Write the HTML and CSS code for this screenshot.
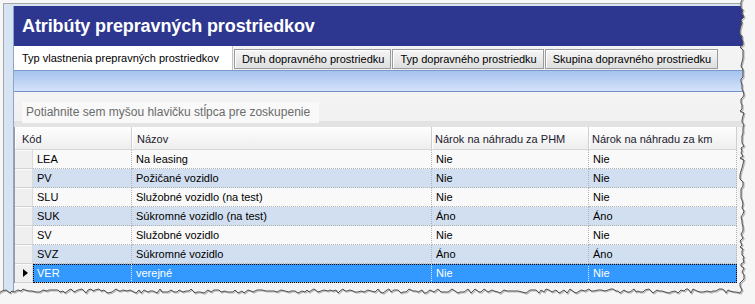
FILE: index.html
```html
<!DOCTYPE html>
<html lang="sk">
<head>
  <meta charset="UTF-8">
  <title>Atribúty prepravných prostriedkov</title>
  <link rel="stylesheet" href="styles.css">
</head>
<body>
  <div class="frame">
    <div class="panel">
      <div class="title">Atribúty prepravných prostriedkov</div>
      <div class="tabs">
        <div class="tab active">Typ vlastnenia prepravných prostriedkov</div>
        <div class="tab">Druh dopravného prostriedku</div>
        <div class="tab">Typ dopravného prostriedku</div>
        <div class="tab">Skupina dopravného prostriedku</div>
      </div>
      <div class="bluebar"></div>
      <div class="group">
        <span class="group-hint">Potiahnite sem myšou hlavičku stĺpca pre zoskupenie</span>
      </div>
      <div class="grid">
        <div class="head">
          <div class="hc h-kod">Kód</div>
          <div class="hc c-name">Názov</div>
          <div class="hc c-phm">Nárok na náhradu za PHM</div>
          <div class="hc c-km">Nárok na náhradu za km</div>
        </div>
        <div class="rows">
          <div class="row">
            <div class="sel"></div>
            <div class="cells">
              <div class="c c-kod">LEA</div><div class="c c-name">Na leasing</div><div class="c c-phm">Nie</div><div class="c c-km">Nie</div>
            </div>
          </div>
          <div class="row">
            <div class="sel"></div>
            <div class="cells">
              <div class="c c-kod">PV</div><div class="c c-name">Požičané vozidlo</div><div class="c c-phm">Nie</div><div class="c c-km">Nie</div>
            </div>
          </div>
          <div class="row">
            <div class="sel"></div>
            <div class="cells">
              <div class="c c-kod">SLU</div><div class="c c-name">Služobné vozidlo (na test)</div><div class="c c-phm">Nie</div><div class="c c-km">Nie</div>
            </div>
          </div>
          <div class="row">
            <div class="sel"></div>
            <div class="cells">
              <div class="c c-kod">SUK</div><div class="c c-name">Súkromné vozidlo (na test)</div><div class="c c-phm">Áno</div><div class="c c-km">Áno</div>
            </div>
          </div>
          <div class="row">
            <div class="sel"></div>
            <div class="cells">
              <div class="c c-kod">SV</div><div class="c c-name">Služobné vozidlo</div><div class="c c-phm">Nie</div><div class="c c-km">Nie</div>
            </div>
          </div>
          <div class="row">
            <div class="sel"></div>
            <div class="cells">
              <div class="c c-kod">SVZ</div><div class="c c-name">Súkromné vozidlo</div><div class="c c-phm">Áno</div><div class="c c-km">Áno</div>
            </div>
          </div>
          <div class="row current">
            <div class="sel"></div>
            <div class="cells">
              <div class="c c-kod">VER</div><div class="c c-name">verejné</div><div class="c c-phm">Nie</div><div class="c c-km">Nie</div>
            </div>
          </div>
        </div>
      </div>
    </div>
  </div>

  <svg id="tear" class="tear" width="755" height="304">
    <path id="tear-fill" fill="#f6f6f6"></path>
    <path id="tear-shadow" fill="none" stroke="#b4b4b4" stroke-width="1.2" transform="translate(1,1)"></path>
    <path id="tear-line" fill="none" stroke="#4d4d4d" stroke-width="1"></path>
  </svg>

  <script>
    // torn paper edge along the right and bottom
    let seed = 11;
    const rnd = () => {
      seed = (seed * 9301 + 49297) % 233280;
      return seed / 233280;
    };
    const pts = [];
    for (let y = -2; y < 290; y += 2 + Math.floor(rnd() * 3)) {
      pts.push([742 + Math.round(rnd() * 4 - 2), y]);
    }
    for (let x = 742; x > -4; x -= 2 + Math.floor(rnd() * 3)) {
      pts.push([x, 291 + Math.round(rnd() * 4 - 2)]);
    }
    const line = 'M' + pts.map(p => p.join(',')).join(' L');
    document.getElementById('tear-fill').setAttribute('d', line + ' L-4,310 L760,310 L760,-4 Z');
    document.getElementById('tear-shadow').setAttribute('d', line);
    document.getElementById('tear-line').setAttribute('d', line);
  </script>
</body>
</html>
```

FILE: styles.css
```css
body {
  margin: 0;
  width: 755px;
  height: 304px;
  overflow: hidden;
  position: relative;
  background-color: #f6f6f6;
  font-family: "Liberation Sans", Arial, sans-serif;
  font-size: 11px;
  color: #000;
}

.frame {
  margin: 3px 0 0 3px;
  height: 300px;
  padding: 2px 0 0 9px;
  border-top: 1px solid #a6a6a6;
  border-left: 1px solid #a6a6a6;
  background-color: #d5e3f2;
}

.panel {
  height: 100%;
  border-left: 1px solid #8ea4c2;
  background-color: #f4f4f4;
}

.title {
  height: 40px;
  padding-left: 8px;
  line-height: 40px;
  background-color: #2e3790;
  color: #fff;
  font-size: 18px;
  font-weight: bold;
  letter-spacing: -0.1px;
}

/* tabs */
.tabs {
  display: flex;
  align-items: flex-end;
  height: 24px;
  background-color: #f3f3f3;
}

.tab {
  box-sizing: border-box;
  height: 20px;
  margin: 0 1px 1px 0;
  padding: 0 6px 0 7px;
  line-height: 18px;
  white-space: nowrap;
  border: 1px solid #9b9b9b;
  background: linear-gradient(#f6f6f6, #dedede);
  box-shadow: inset 1px 1px #fff;
}

.tab.active {
  height: 24px;
  margin: 0 1px 0 0;
  padding: 0 13px 0 8px;
  line-height: 24px;
  border: none;
  border-right: 1px solid #c4c4c4;
  background: #fff;
  box-shadow: none;
}

.bluebar {
  box-sizing: border-box;
  height: 22px;
  border-top: 1px solid #7898cf;
  border-bottom: 1px solid #7291c4;
  background: linear-gradient(#a6c2ee, #d4e3fa);
}

/* group-by panel */
.group {
  box-sizing: border-box;
  height: 35px;
  padding: 10px 0 0 8px;
  background: linear-gradient(#f4f4f4 0, #f1f1f1 29px, #e3e3e3 29px);
}

.group-hint {
  display: inline-block;
  height: 21px;
  padding: 0 9px 0 4px;
  line-height: 21px;
  background-color: #f9f9f9;
  color: #6b6b6b;
  font-size: 12px;
}

/* grid */
.grid {
  border-left: 1px solid #9c9c9c;
}

.head {
  display: flex;
  box-sizing: border-box;
  height: 23px;
  width: 722px;
  border-bottom: 1px solid #d6d6d6;
  background: linear-gradient(#fefefe, #eeeeee);
}

.hc {
  box-sizing: border-box;
  padding: 2px 0 0 5px;
  line-height: 20px;
  border-right: 1px solid #cfcfcf;
  box-shadow: inset 1px 0 #fff;
  color: #221a2e;
  white-space: nowrap;
}

.h-kod {
  width: 117px;
  padding-left: 7px;
}

.c-kod { width: 99px; }
.c-name { width: 300px; }
.c-phm { width: 157px; }
.c-km { width: 148px; }

.head .c-phm,
.head .c-km {
  padding-left: 3px;
}

.row {
  display: flex;
  height: 19px;
}

.sel {
  position: relative;
  box-sizing: border-box;
  width: 18px;
  border-right: 1px solid #dadada;
  border-bottom: 1px solid #d2d2d2;
  background-color: #efefef;
  box-shadow: inset 0 1px #fbfbfb;
}

.cells {
  display: flex;
}

.c {
  box-sizing: border-box;
  height: 19px;
  padding-left: 4px;
  line-height: 18px;
  white-space: nowrap;
  border-right: 1px dotted #b3b3b3;
  border-bottom: 1px dotted #b3b3b3;
  background-color: #f9f9f9;
}

.row:nth-child(even) .c {
  background-color: #d1dff0;
}

.row.current .cells {
  outline: 1px dotted #000;
  outline-offset: -1px;
}

.row.current .c {
  background-color: #3399ff;
  border-right-color: #d8e8ff;
  color: #fff;
}

.row.current .sel::after {
  content: "";
  position: absolute;
  left: 8px;
  top: 5px;
  border-left: 5px solid #000;
  border-top: 4px solid transparent;
  border-bottom: 4px solid transparent;
}

.tear {
  position: absolute;
  left: 0;
  top: 0;
  pointer-events: none;
}
```
